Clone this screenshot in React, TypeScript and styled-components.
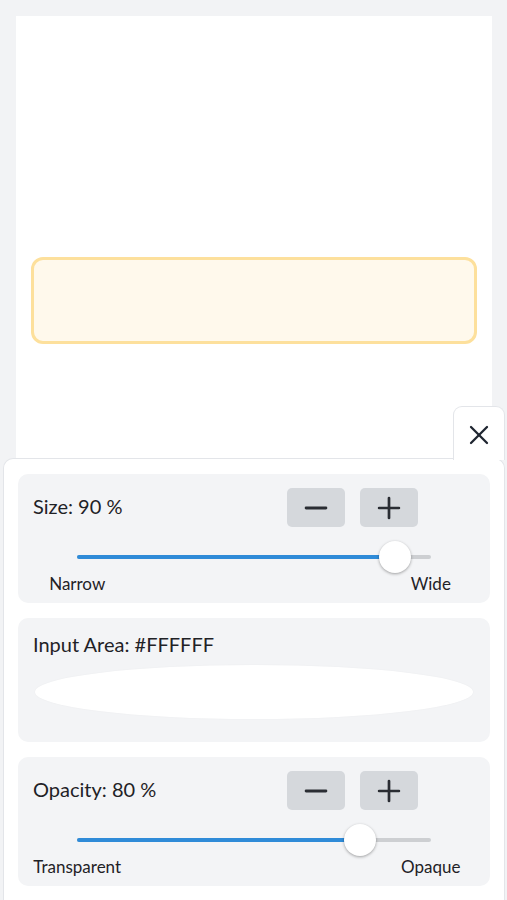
import React from 'react';
import styled, { createGlobalStyle } from 'styled-components';
import { Minus, Plus, X } from 'lucide-react';

// == styles =======================================================================================
const GlobalStyle = createGlobalStyle`
  html, body {
    margin: 0;
    padding: 0;
    background: #f2f3f5;
  }
  body {
    font-family: Lato, 'Open Sans', sans-serif;
    color: #1f2226;
  }
`;

const Page = styled.div`
  width: 507px;
  height: 900px;
  overflow: hidden;
  display: flex;
  flex-direction: column;
`;

const Canvas = styled.div`
  flex-shrink: 0;
  height: 442px;
  margin: 16px 15px 0 16px;
  padding-top: 241px;
  box-sizing: border-box;
  background: #fff;
`;

const Highlight = styled.div`
  height: 87px;
  margin: 0 15px;
  box-sizing: border-box;
  background: #fff9ec;
  border: 3px solid #fde09c;
  border-radius: 12px;
`;

const Panel = styled.div`
  position: relative;
  flex: 1;
  margin: 0 2px 0 3px;
  padding: 15px 14px 15px;
  display: flex;
  flex-direction: column;
  gap: 15px;
  background: #fff;
  border: 1px solid #e3e5e9;
  border-bottom: none;
  border-radius: 10px 10px 0 0;
`;

const CloseTab = styled.button`
  position: absolute;
  right: -1px;
  bottom: 100%;
  width: 52px;
  height: 54px;
  margin-bottom: -1px;
  padding: 2px 0 0;
  display: flex;
  align-items: center;
  justify-content: center;
  background: #fff;
  border: 1px solid #e3e5e9;
  border-bottom: none;
  border-radius: 9px 9px 0 0;
  color: #1e2530;
  cursor: pointer;
`;

const Section = styled.div<{ $bottom: number }>`
  flex-shrink: 0;
  padding: 14px 15px ${ ( p ) => p.$bottom }px;
  background: #f3f4f6;
  border-radius: 10px;
`;

const Header = styled.div`
  display: flex;
  align-items: center;
  justify-content: space-between;
  height: 39px;
`;

const Title = styled.div`
  font-size: 20px;
  line-height: 24px;
  padding-bottom: 3px;
`;

const Buttons = styled.div`
  display: flex;
  gap: 15px;
  margin-right: 57px;
`;

const StepButton = styled.button`
  width: 58px;
  height: 39px;
  padding: 0;
  display: flex;
  align-items: center;
  justify-content: center;
  background: #d5d8dc;
  border: none;
  border-radius: 5px;
  color: #2a2d33;
  cursor: pointer;
`;

const SliderWrap = styled.div`
  width: 80%;
  height: 32px;
  margin: 14px auto 0;
  display: flex;
  align-items: center;
`;

const Track = styled.div`
  position: relative;
  width: 100%;
  height: 4px;
  background: #cdcfd2;
  border-radius: 2px;
`;

const Fill = styled.div`
  height: 100%;
  background: #2f8bd8;
  border-radius: 2px;
`;

const Thumb = styled.div`
  position: absolute;
  top: 50%;
  width: 32px;
  height: 32px;
  transform: translate(-50%, -50%);
  box-sizing: border-box;
  background: #fff;
  border-radius: 50%;
  box-shadow: 0 1px 3px rgba(0, 0, 0, 0.35);
`;

const Labels = styled.div`
  width: 80%;
  height: 20px;
  margin: 0 auto;
  display: flex;
  justify-content: space-between;
`;

const LabelAnchor = styled.div`
  width: 0;
  display: flex;
  justify-content: center;
  white-space: nowrap;
  font-size: 17px;
  line-height: 22px;
`;

const Swatch = styled.div`
  height: 54px;
  margin: 6px 2px 0;
  background: #fff;
  border-radius: 50%;
  box-shadow: 0 0 2px rgba(0, 0, 0, 0.04);
`;

// == element ======================================================================================
interface StepperProps {
  title: string;
  value: number;
  low: string;
  high: string;
}

const StepperSection: React.FC<StepperProps> = ( { title, value, low, high } ) => (
  <Section $bottom={ 10 }>
    <Header>
      <Title>{ title }: { value } %</Title>
      <Buttons>
        <StepButton aria-label="decrease"><Minus size={ 34 } strokeWidth={ 2 } /></StepButton>
        <StepButton aria-label="increase"><Plus size={ 34 } strokeWidth={ 1.9 } /></StepButton>
      </Buttons>
    </Header>
    <SliderWrap>
      <Track>
        <Fill style={ { width: `${ value }%` } } />
        <Thumb style={ { left: `${ value }%` } } />
      </Track>
    </SliderWrap>
    <Labels>
      <LabelAnchor>{ low }</LabelAnchor>
      <LabelAnchor>{ high }</LabelAnchor>
    </Labels>
  </Section>
);

export default function App() {
  return <>
    <GlobalStyle />
    <Page>
      <Canvas>
        <Highlight />
      </Canvas>
      <Panel>
        <CloseTab aria-label="close"><X size={ 32 } strokeWidth={ 1.7 } /></CloseTab>
        <StepperSection title="Size" value={ 90 } low="Narrow" high="Wide" />
        <Section $bottom={ 23 }>
          <Title>Input Area: #FFFFFF</Title>
          <Swatch />
        </Section>
        <StepperSection title="Opacity" value={ 80 } low="Transparent" high="Opaque" />
      </Panel>
    </Page>
  </>;
}
